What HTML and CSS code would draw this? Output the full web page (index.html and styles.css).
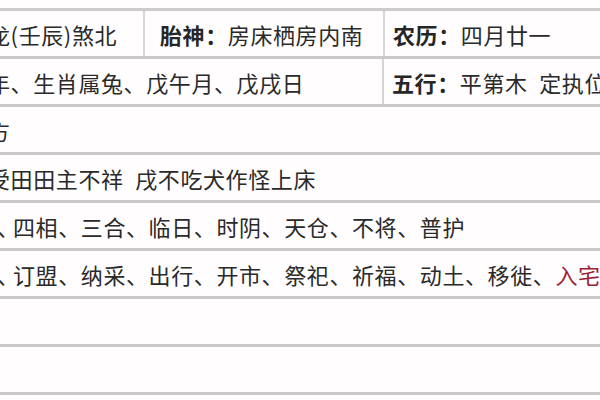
FILE: index.html
```html
<!DOCTYPE html>
<html lang="zh-CN">
<head>
<meta charset="utf-8">
<title>黄历</title>
<link rel="stylesheet" href="styles.css">
</head>
<body>
<div class="table">
  <div class="row">
    <div class="cell c1"><span class="lead">龙</span>(壬辰)煞北</div>
    <div class="cell c2"><b>胎神：</b>房床栖房内南</div>
    <div class="cell c3"><b>农历：</b>四月廿一</div>
  </div>
  <div class="row">
    <div class="cell wide"><span class="lead">年</span>、生肖属兔、戊午月、戊戌日</div>
    <div class="cell c3"><b>五行：</b>平第木&ensp;定执位</div>
  </div>
  <div class="row">
    <div class="cell full"><span class="lead">方</span></div>
  </div>
  <div class="row">
    <div class="cell full"><span class="lead">受</span>田田主不祥&ensp;戌不吃犬作怪上床</div>
  </div>
  <div class="row">
    <div class="cell full"><span class="tick">、</span>四相、三合、临日、时阴、天仓、不将、普护</div>
  </div>
  <div class="row">
    <div class="cell full"><span class="tick">、</span>订盟、纳采、出行、开市、祭祀、祈福、动土、移徙、<span class="hot">入宅</span></div>
  </div>
  <div class="row">
    <div class="cell full"></div>
  </div>
  <div class="row">
    <div class="cell full"></div>
  </div>
</div>
</body>
</html>
```

FILE: styles.css
```css
html, body {
  margin: 0;
  padding: 0;
}
body {
  width: 600px;
  height: 400px;
  overflow: hidden;
  background: #fffdfe;
  font-family: "Noto Sans CJK SC", "Noto Sans", sans-serif;
  font-size: 22px;
  letter-spacing: 0.6px;
  color: #2a2a2a;
}
.table {
  margin-top: 8px;
  border-top: 3px solid #cdc9cd;
  width: 600px;
}
.row {
  display: flex;
  height: 45px;
  border-bottom: 3px solid #cbc7cb;
}
.cell {
  display: flex;
  align-items: center;
  white-space: nowrap;
  overflow: hidden;
}
.c1 {
  width: 143px;
  border-right: 2px solid #d6d3d6;
}
.c2 {
  width: 223px;
  padding-left: 15px;
  border-right: 2px solid #d6d3d6;
}
.wide {
  width: 382px;
  border-right: 2px solid #d6d3d6;
}
.c3 {
  flex: 1;
  padding-left: 8px;
}
.full {
  flex: 1;
}
.lead {
  margin-left: -12px;
}
.tick {
  display: inline-block;
  width: 16px;
  margin-left: -3px;
  letter-spacing: 0;
  overflow: visible;
}
b {
  font-weight: 700;
  color: #262626;
}
.hot {
  color: #9e2035;
}
```
